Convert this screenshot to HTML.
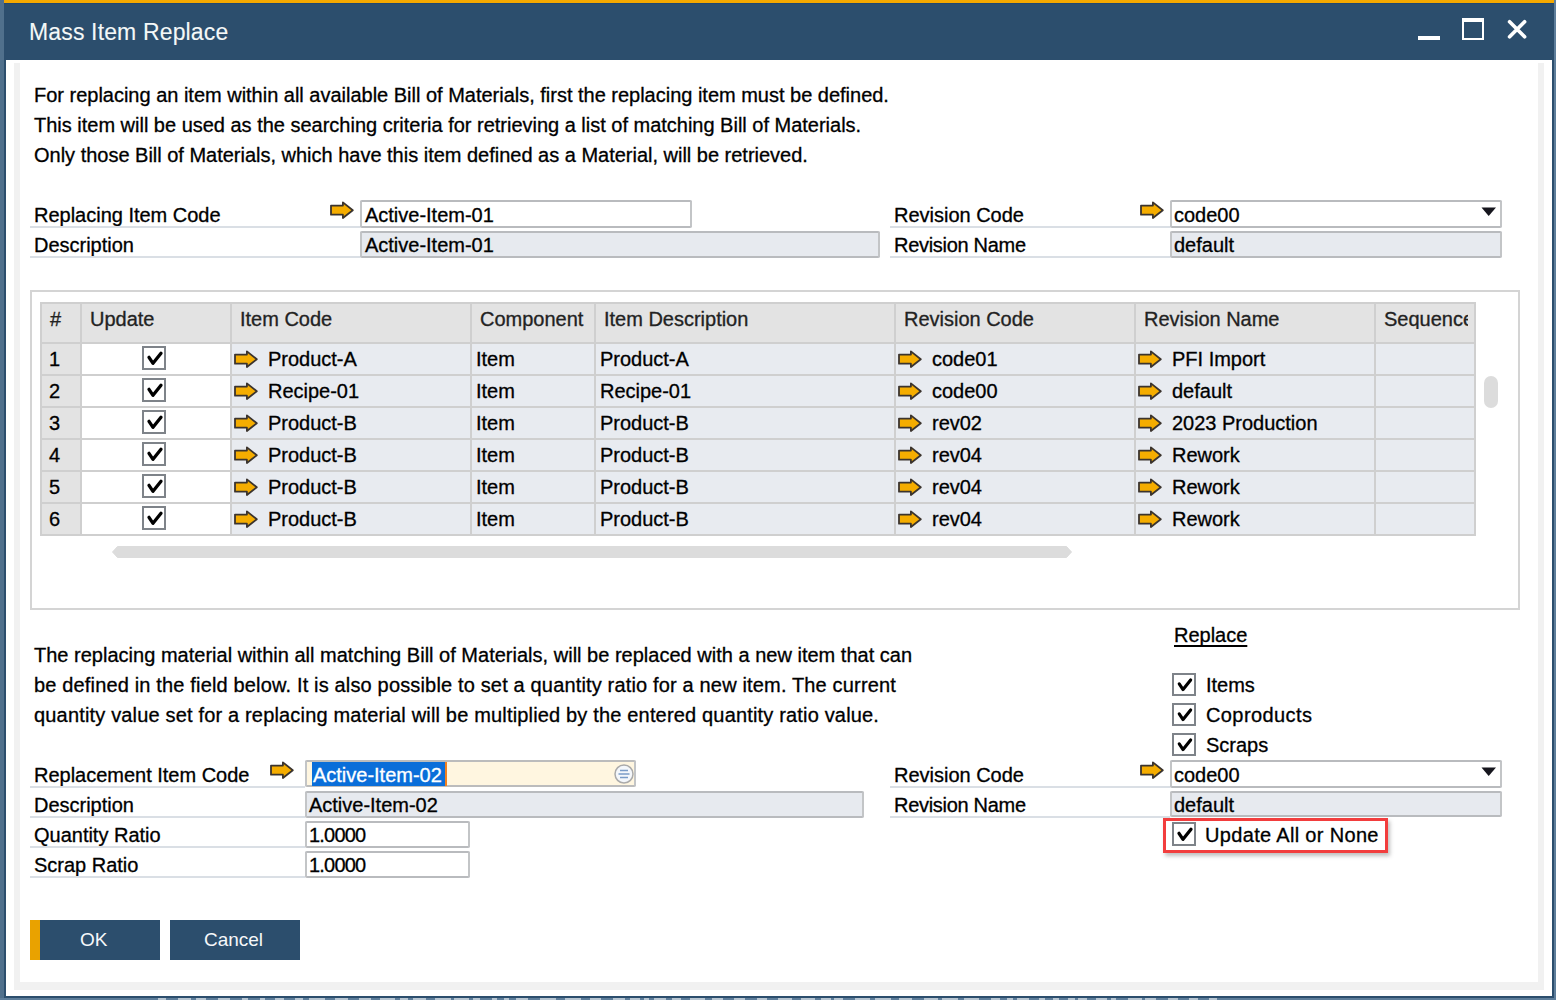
<!DOCTYPE html>
<html><head><meta charset="utf-8"><style>
html,body{margin:0;padding:0;width:1556px;height:1000px;overflow:hidden;background:#5e7e9b}
body{position:relative;font-family:"Liberation Sans", sans-serif}
.t{position:absolute;white-space:nowrap;font-family:"Liberation Sans", sans-serif;-webkit-text-stroke:0.3px currentColor;letter-spacing:-0.01px}
.r{position:absolute}
.fld{position:absolute;border:2px solid #b9bbbe;border-radius:2px}
.cb{position:absolute;border:2px solid #7e8389;background:#fff}
</style></head><body>
<div class="r" style="left:0px;top:0px;width:1556px;height:1000px;background:#5e7e9b;"></div>
<div class="r" style="left:0px;top:0px;width:4px;height:998px;background:#50708c;"></div>
<div class="r" style="left:4px;top:0px;width:1550px;height:998px;background:#2c4e6d;"></div>
<div class="r" style="left:4px;top:0px;width:1550px;height:3px;background:#f5a900;"></div>
<div class="r" style="left:4px;top:3px;width:1550px;height:1px;background:#22476f;"></div>
<div class="r" style="left:6px;top:60px;width:1546px;height:936px;background:#ffffff;"></div>
<div class="r" style="left:14px;top:63px;width:6px;height:927px;background:#f1f1f1;"></div>
<div class="r" style="left:1538px;top:63px;width:6px;height:927px;background:#f1f1f1;"></div>
<div class="r" style="left:14px;top:982px;width:1530px;height:8px;background:#f1f1f1;"></div>
<div class="r" style="left:158px;top:998px;width:8px;height:2px;background:#b8c6d2;"></div>
<div class="r" style="left:178px;top:998px;width:13px;height:2px;background:#b8c6d2;"></div>
<div class="r" style="left:196px;top:998px;width:10px;height:2px;background:#b8c6d2;"></div>
<div class="r" style="left:218px;top:998px;width:12px;height:2px;background:#b8c6d2;"></div>
<div class="r" style="left:242px;top:998px;width:6px;height:2px;background:#b8c6d2;"></div>
<div class="r" style="left:260px;top:998px;width:5px;height:2px;background:#b8c6d2;"></div>
<div class="r" style="left:275px;top:998px;width:9px;height:2px;background:#b8c6d2;"></div>
<div class="r" style="left:295px;top:998px;width:8px;height:2px;background:#b8c6d2;"></div>
<div class="r" style="left:309px;top:998px;width:16px;height:2px;background:#b8c6d2;"></div>
<div class="r" style="left:335px;top:998px;width:13px;height:2px;background:#b8c6d2;"></div>
<div class="r" style="left:359px;top:998px;width:12px;height:2px;background:#b8c6d2;"></div>
<div class="r" style="left:380px;top:998px;width:15px;height:2px;background:#b8c6d2;"></div>
<div class="r" style="left:400px;top:998px;width:8px;height:2px;background:#b8c6d2;"></div>
<div class="r" style="left:413px;top:998px;width:13px;height:2px;background:#b8c6d2;"></div>
<div class="r" style="left:435px;top:998px;width:16px;height:2px;background:#b8c6d2;"></div>
<div class="r" style="left:454px;top:998px;width:15px;height:2px;background:#b8c6d2;"></div>
<div class="r" style="left:473px;top:998px;width:7px;height:2px;background:#b8c6d2;"></div>
<div class="r" style="left:492px;top:998px;width:5px;height:2px;background:#b8c6d2;"></div>
<div class="r" style="left:504px;top:998px;width:5px;height:2px;background:#b8c6d2;"></div>
<div class="r" style="left:516px;top:998px;width:12px;height:2px;background:#b8c6d2;"></div>
<div class="r" style="left:540px;top:998px;width:16px;height:2px;background:#b8c6d2;"></div>
<div class="r" style="left:565px;top:998px;width:16px;height:2px;background:#b8c6d2;"></div>
<div class="r" style="left:590px;top:998px;width:11px;height:2px;background:#b8c6d2;"></div>
<div class="r" style="left:613px;top:998px;width:12px;height:2px;background:#b8c6d2;"></div>
<div class="r" style="left:630px;top:998px;width:10px;height:2px;background:#b8c6d2;"></div>
<div class="r" style="left:644px;top:998px;width:5px;height:2px;background:#b8c6d2;"></div>
<div class="r" style="left:654px;top:998px;width:12px;height:2px;background:#b8c6d2;"></div>
<div class="r" style="left:672px;top:998px;width:9px;height:2px;background:#b8c6d2;"></div>
<div class="r" style="left:690px;top:998px;width:15px;height:2px;background:#b8c6d2;"></div>
<div class="r" style="left:712px;top:998px;width:11px;height:2px;background:#b8c6d2;"></div>
<div class="r" style="left:734px;top:998px;width:11px;height:2px;background:#b8c6d2;"></div>
<div class="r" style="left:757px;top:998px;width:10px;height:2px;background:#b8c6d2;"></div>
<div class="r" style="left:778px;top:998px;width:14px;height:2px;background:#b8c6d2;"></div>
<div class="r" style="left:801px;top:998px;width:14px;height:2px;background:#b8c6d2;"></div>
<div class="r" style="left:821px;top:998px;width:10px;height:2px;background:#b8c6d2;"></div>
<div class="r" style="left:834px;top:998px;width:9px;height:2px;background:#b8c6d2;"></div>
<div class="r" style="left:855px;top:998px;width:15px;height:2px;background:#b8c6d2;"></div>
<div class="r" style="left:875px;top:998px;width:16px;height:2px;background:#b8c6d2;"></div>
<div class="r" style="left:899px;top:998px;width:13px;height:2px;background:#b8c6d2;"></div>
<div class="r" style="left:924px;top:998px;width:14px;height:2px;background:#b8c6d2;"></div>
<div class="r" style="left:942px;top:998px;width:16px;height:2px;background:#b8c6d2;"></div>
<div class="r" style="left:964px;top:998px;width:15px;height:2px;background:#b8c6d2;"></div>
<div class="r" style="left:991px;top:998px;width:9px;height:2px;background:#b8c6d2;"></div>
<div class="r" style="left:1007px;top:998px;width:6px;height:2px;background:#b8c6d2;"></div>
<div class="r" style="left:1017px;top:998px;width:12px;height:2px;background:#b8c6d2;"></div>
<div class="r" style="left:1039px;top:998px;width:6px;height:2px;background:#b8c6d2;"></div>
<div class="r" style="left:1053px;top:998px;width:6px;height:2px;background:#b8c6d2;"></div>
<div class="r" style="left:1068px;top:998px;width:7px;height:2px;background:#b8c6d2;"></div>
<div class="r" style="left:1078px;top:998px;width:9px;height:2px;background:#b8c6d2;"></div>
<div class="r" style="left:1096px;top:998px;width:11px;height:2px;background:#b8c6d2;"></div>
<div class="r" style="left:1111px;top:998px;width:5px;height:2px;background:#b8c6d2;"></div>
<div class="r" style="left:1128px;top:998px;width:14px;height:2px;background:#b8c6d2;"></div>
<div class="r" style="left:1145px;top:998px;width:11px;height:2px;background:#b8c6d2;"></div>
<div class="r" style="left:1168px;top:998px;width:10px;height:2px;background:#b8c6d2;"></div>
<div class="r" style="left:1189px;top:998px;width:9px;height:2px;background:#b8c6d2;"></div>
<div class="r" style="left:1209px;top:998px;width:8px;height:2px;background:#b8c6d2;"></div>
<div class="t" style="left:29px;top:21px;font-size:23px;line-height:23px;color:#f4f8f8;-webkit-text-stroke:0.1px #f4f8f8;letter-spacing:0.15px">Mass Item Replace</div>
<div class="r" style="left:1418px;top:36px;width:22px;height:4px;background:#ffffff;"></div>
<div class="r" style="left:1462px;top:18px;width:18px;height:16px;border:2px solid #fff;border-top-width:4px;border-bottom-width:2.5px;background:transparent"></div>
<svg width="22" height="22" viewBox="0 0 22 22" style="position:absolute;left:1506px;top:19px"><path d="M3.6,2.8 L18.6,17.8 M18.6,2.8 L3.6,17.8" stroke="#fff" stroke-width="3.7" stroke-linecap="round"/></svg>
<div class="t" style="left:34px;top:85px;font-size:20px;line-height:20px;color:#000;">For replacing an item within all available Bill of Materials, first the replacing item must be defined.</div>
<div class="t" style="left:34px;top:115px;font-size:20px;line-height:20px;color:#000;">This item will be used as the searching criteria for retrieving a list of matching Bill of Materials.</div>
<div class="t" style="left:34px;top:145px;font-size:20px;line-height:20px;color:#000;">Only those Bill of Materials, which have this item defined as a Material, will be retrieved.</div>
<div class="t" style="left:34px;top:205px;font-size:20px;line-height:20px;color:#000;">Replacing Item Code</div>
<div class="r" style="left:30px;top:226px;width:330px;height:2px;background:#dadfe5;"></div>
<div class="t" style="left:34px;top:235px;font-size:20px;line-height:20px;color:#000;">Description</div>
<div class="r" style="left:30px;top:256px;width:330px;height:2px;background:#dadfe5;"></div>
<svg width="24" height="19" viewBox="0 0 24 19" style="position:absolute;left:330px;top:201px"><path d="M1,4.6 H12.9 V1.4 L22.8,9.2 L12.9,17 V13.7 H1 Z" fill="#f5ad00" stroke="#3b342e" stroke-width="1.8" stroke-linejoin="round"/></svg>
<div class="fld" style="left:360px;top:200px;width:328px;height:24px;background:#fff;border-color:#b9bbbe;border-left-color:#c3c5c7;border-right-color:#c3c5c7"></div>
<div class="t" style="left:365px;top:205px;font-size:20px;line-height:20px;color:#000;">Active-Item-01</div>
<div class="fld" style="left:360px;top:231px;width:516px;height:23px;background:#e7eaef;border-color:#b9bbbe;border-left-color:#c3c5c7;border-right-color:#c3c5c7"></div>
<div class="t" style="left:365px;top:235px;font-size:20px;line-height:20px;color:#000;">Active-Item-01</div>
<div class="t" style="left:894px;top:205px;font-size:20px;line-height:20px;color:#000;">Revision Code</div>
<div class="r" style="left:890px;top:226px;width:280px;height:2px;background:#dadfe5;"></div>
<div class="t" style="left:894px;top:235px;font-size:20px;line-height:20px;color:#000;letter-spacing:-0.3px">Revision Name</div>
<div class="r" style="left:890px;top:256px;width:280px;height:2px;background:#dadfe5;"></div>
<svg width="24" height="19" viewBox="0 0 24 19" style="position:absolute;left:1140px;top:201px"><path d="M1,4.6 H12.9 V1.4 L22.8,9.2 L12.9,17 V13.7 H1 Z" fill="#f5ad00" stroke="#3b342e" stroke-width="1.8" stroke-linejoin="round"/></svg>
<div class="fld" style="left:1170px;top:200px;width:328px;height:24px;background:#fff;border-color:#b9bbbe;border-left-color:#c3c5c7;border-right-color:#c3c5c7"></div>
<div class="t" style="left:1174px;top:205px;font-size:20px;line-height:20px;color:#000;">code00</div>
<svg width="16" height="10" viewBox="0 0 16 10" style="position:absolute;left:1481px;top:207px"><path d="M0.5,0.5 H15 L7.7,9 Z" fill="#16161e"/></svg>
<div class="fld" style="left:1170px;top:231px;width:328px;height:23px;background:#e7eaef;border-color:#b9bbbe;border-left-color:#c3c5c7;border-right-color:#c3c5c7"></div>
<div class="t" style="left:1174px;top:235px;font-size:20px;line-height:20px;color:#000;">default</div>
<div class="r" style="left:30px;top:290px;width:1486px;height:316px;border:2px solid #d4d4d4;background:#fff"></div>
<div class="r" style="left:40px;top:302px;width:1436px;height:40px;background:#e3e3e3;"></div>
<div class="r" style="left:40px;top:342px;width:40px;height:32px;background:#e3e3e3;"></div>
<div class="r" style="left:80px;top:342px;width:150px;height:32px;background:#ffffff;"></div>
<div class="r" style="left:230px;top:342px;width:1246px;height:32px;background:#e8ebf0;"></div>
<div class="r" style="left:40px;top:374px;width:40px;height:32px;background:#e3e3e3;"></div>
<div class="r" style="left:80px;top:374px;width:150px;height:32px;background:#ffffff;"></div>
<div class="r" style="left:230px;top:374px;width:1246px;height:32px;background:#e8ebf0;"></div>
<div class="r" style="left:40px;top:406px;width:40px;height:32px;background:#e3e3e3;"></div>
<div class="r" style="left:80px;top:406px;width:150px;height:32px;background:#ffffff;"></div>
<div class="r" style="left:230px;top:406px;width:1246px;height:32px;background:#e8ebf0;"></div>
<div class="r" style="left:40px;top:438px;width:40px;height:32px;background:#e3e3e3;"></div>
<div class="r" style="left:80px;top:438px;width:150px;height:32px;background:#ffffff;"></div>
<div class="r" style="left:230px;top:438px;width:1246px;height:32px;background:#e8ebf0;"></div>
<div class="r" style="left:40px;top:470px;width:40px;height:32px;background:#e3e3e3;"></div>
<div class="r" style="left:80px;top:470px;width:150px;height:32px;background:#ffffff;"></div>
<div class="r" style="left:230px;top:470px;width:1246px;height:32px;background:#e8ebf0;"></div>
<div class="r" style="left:40px;top:502px;width:40px;height:32px;background:#e3e3e3;"></div>
<div class="r" style="left:80px;top:502px;width:150px;height:32px;background:#ffffff;"></div>
<div class="r" style="left:230px;top:502px;width:1246px;height:32px;background:#e8ebf0;"></div>
<div class="r" style="left:40px;top:302px;width:1436px;height:2px;background:#cfcfcf;"></div>
<div class="r" style="left:40px;top:342px;width:1436px;height:2px;background:#cfcfcf;"></div>
<div class="r" style="left:40px;top:374px;width:1436px;height:2px;background:#cfcfcf;"></div>
<div class="r" style="left:40px;top:406px;width:1436px;height:2px;background:#cfcfcf;"></div>
<div class="r" style="left:40px;top:438px;width:1436px;height:2px;background:#cfcfcf;"></div>
<div class="r" style="left:40px;top:470px;width:1436px;height:2px;background:#cfcfcf;"></div>
<div class="r" style="left:40px;top:502px;width:1436px;height:2px;background:#cfcfcf;"></div>
<div class="r" style="left:40px;top:534px;width:1436px;height:2px;background:#cfcfcf;"></div>
<div class="r" style="left:40px;top:302px;width:2px;height:234px;background:#cfcfcf;"></div>
<div class="r" style="left:80px;top:302px;width:2px;height:234px;background:#cfcfcf;"></div>
<div class="r" style="left:230px;top:302px;width:2px;height:234px;background:#cfcfcf;"></div>
<div class="r" style="left:470px;top:302px;width:2px;height:234px;background:#cfcfcf;"></div>
<div class="r" style="left:594px;top:302px;width:2px;height:234px;background:#cfcfcf;"></div>
<div class="r" style="left:894px;top:302px;width:2px;height:234px;background:#cfcfcf;"></div>
<div class="r" style="left:1134px;top:302px;width:2px;height:234px;background:#cfcfcf;"></div>
<div class="r" style="left:1374px;top:302px;width:2px;height:234px;background:#cfcfcf;"></div>
<div class="r" style="left:1474px;top:302px;width:2px;height:234px;background:#cfcfcf;"></div>
<div style="position:absolute;left:1376px;top:302px;width:96px;height:40px;overflow:hidden">
</div>
<div class="t" style="left:50px;top:309px;font-size:20px;line-height:20px;color:#222;">#</div>
<div class="t" style="left:90px;top:309px;font-size:20px;line-height:20px;color:#222;">Update</div>
<div class="t" style="left:240px;top:309px;font-size:20px;line-height:20px;color:#222;">Item Code</div>
<div class="t" style="left:480px;top:309px;font-size:20px;line-height:20px;color:#222;">Component</div>
<div class="t" style="left:604px;top:309px;font-size:20px;line-height:20px;color:#222;">Item Description</div>
<div class="t" style="left:904px;top:309px;font-size:20px;line-height:20px;color:#222;">Revision Code</div>
<div class="t" style="left:1144px;top:309px;font-size:20px;line-height:20px;color:#222;">Revision Name</div>
<div class="t" style="left:1384px;top:309px;width:84px;overflow:hidden;font-size:20px;line-height:20px;color:#222">Sequence</div>
<div class="t" style="left:49px;top:349px;font-size:20px;line-height:20px;color:#000;">1</div>
<div class="cb" style="left:142px;top:346px;width:20px;height:20px"><svg width="20" height="20" viewBox="0 0 20 20" style="position:absolute;left:0;top:0"><path d="M5,9.3 L9,15.3 L17,5.2" fill="none" stroke="#000" stroke-width="3.3" stroke-linejoin="round" stroke-linecap="round"/></svg></div>
<svg width="24" height="19" viewBox="0 0 24 19" style="position:absolute;left:234px;top:350px"><path d="M1,4.6 H12.9 V1.4 L22.8,9.2 L12.9,17 V13.7 H1 Z" fill="#f5ad00" stroke="#3b342e" stroke-width="1.8" stroke-linejoin="round"/></svg>
<div class="t" style="left:268px;top:349px;font-size:20px;line-height:20px;color:#000;">Product-A</div>
<div class="t" style="left:476px;top:349px;font-size:20px;line-height:20px;color:#000;">Item</div>
<div class="t" style="left:600px;top:349px;font-size:20px;line-height:20px;color:#000;">Product-A</div>
<svg width="24" height="19" viewBox="0 0 24 19" style="position:absolute;left:898px;top:350px"><path d="M1,4.6 H12.9 V1.4 L22.8,9.2 L12.9,17 V13.7 H1 Z" fill="#f5ad00" stroke="#3b342e" stroke-width="1.8" stroke-linejoin="round"/></svg>
<div class="t" style="left:932px;top:349px;font-size:20px;line-height:20px;color:#000;">code01</div>
<svg width="24" height="19" viewBox="0 0 24 19" style="position:absolute;left:1138px;top:350px"><path d="M1,4.6 H12.9 V1.4 L22.8,9.2 L12.9,17 V13.7 H1 Z" fill="#f5ad00" stroke="#3b342e" stroke-width="1.8" stroke-linejoin="round"/></svg>
<div class="t" style="left:1172px;top:349px;font-size:20px;line-height:20px;color:#000;">PFI Import</div>
<div class="t" style="left:49px;top:381px;font-size:20px;line-height:20px;color:#000;">2</div>
<div class="cb" style="left:142px;top:378px;width:20px;height:20px"><svg width="20" height="20" viewBox="0 0 20 20" style="position:absolute;left:0;top:0"><path d="M5,9.3 L9,15.3 L17,5.2" fill="none" stroke="#000" stroke-width="3.3" stroke-linejoin="round" stroke-linecap="round"/></svg></div>
<svg width="24" height="19" viewBox="0 0 24 19" style="position:absolute;left:234px;top:382px"><path d="M1,4.6 H12.9 V1.4 L22.8,9.2 L12.9,17 V13.7 H1 Z" fill="#f5ad00" stroke="#3b342e" stroke-width="1.8" stroke-linejoin="round"/></svg>
<div class="t" style="left:268px;top:381px;font-size:20px;line-height:20px;color:#000;">Recipe-01</div>
<div class="t" style="left:476px;top:381px;font-size:20px;line-height:20px;color:#000;">Item</div>
<div class="t" style="left:600px;top:381px;font-size:20px;line-height:20px;color:#000;">Recipe-01</div>
<svg width="24" height="19" viewBox="0 0 24 19" style="position:absolute;left:898px;top:382px"><path d="M1,4.6 H12.9 V1.4 L22.8,9.2 L12.9,17 V13.7 H1 Z" fill="#f5ad00" stroke="#3b342e" stroke-width="1.8" stroke-linejoin="round"/></svg>
<div class="t" style="left:932px;top:381px;font-size:20px;line-height:20px;color:#000;">code00</div>
<svg width="24" height="19" viewBox="0 0 24 19" style="position:absolute;left:1138px;top:382px"><path d="M1,4.6 H12.9 V1.4 L22.8,9.2 L12.9,17 V13.7 H1 Z" fill="#f5ad00" stroke="#3b342e" stroke-width="1.8" stroke-linejoin="round"/></svg>
<div class="t" style="left:1172px;top:381px;font-size:20px;line-height:20px;color:#000;">default</div>
<div class="t" style="left:49px;top:413px;font-size:20px;line-height:20px;color:#000;">3</div>
<div class="cb" style="left:142px;top:410px;width:20px;height:20px"><svg width="20" height="20" viewBox="0 0 20 20" style="position:absolute;left:0;top:0"><path d="M5,9.3 L9,15.3 L17,5.2" fill="none" stroke="#000" stroke-width="3.3" stroke-linejoin="round" stroke-linecap="round"/></svg></div>
<svg width="24" height="19" viewBox="0 0 24 19" style="position:absolute;left:234px;top:414px"><path d="M1,4.6 H12.9 V1.4 L22.8,9.2 L12.9,17 V13.7 H1 Z" fill="#f5ad00" stroke="#3b342e" stroke-width="1.8" stroke-linejoin="round"/></svg>
<div class="t" style="left:268px;top:413px;font-size:20px;line-height:20px;color:#000;">Product-B</div>
<div class="t" style="left:476px;top:413px;font-size:20px;line-height:20px;color:#000;">Item</div>
<div class="t" style="left:600px;top:413px;font-size:20px;line-height:20px;color:#000;">Product-B</div>
<svg width="24" height="19" viewBox="0 0 24 19" style="position:absolute;left:898px;top:414px"><path d="M1,4.6 H12.9 V1.4 L22.8,9.2 L12.9,17 V13.7 H1 Z" fill="#f5ad00" stroke="#3b342e" stroke-width="1.8" stroke-linejoin="round"/></svg>
<div class="t" style="left:932px;top:413px;font-size:20px;line-height:20px;color:#000;">rev02</div>
<svg width="24" height="19" viewBox="0 0 24 19" style="position:absolute;left:1138px;top:414px"><path d="M1,4.6 H12.9 V1.4 L22.8,9.2 L12.9,17 V13.7 H1 Z" fill="#f5ad00" stroke="#3b342e" stroke-width="1.8" stroke-linejoin="round"/></svg>
<div class="t" style="left:1172px;top:413px;font-size:20px;line-height:20px;color:#000;">2023 Production</div>
<div class="t" style="left:49px;top:445px;font-size:20px;line-height:20px;color:#000;">4</div>
<div class="cb" style="left:142px;top:442px;width:20px;height:20px"><svg width="20" height="20" viewBox="0 0 20 20" style="position:absolute;left:0;top:0"><path d="M5,9.3 L9,15.3 L17,5.2" fill="none" stroke="#000" stroke-width="3.3" stroke-linejoin="round" stroke-linecap="round"/></svg></div>
<svg width="24" height="19" viewBox="0 0 24 19" style="position:absolute;left:234px;top:446px"><path d="M1,4.6 H12.9 V1.4 L22.8,9.2 L12.9,17 V13.7 H1 Z" fill="#f5ad00" stroke="#3b342e" stroke-width="1.8" stroke-linejoin="round"/></svg>
<div class="t" style="left:268px;top:445px;font-size:20px;line-height:20px;color:#000;">Product-B</div>
<div class="t" style="left:476px;top:445px;font-size:20px;line-height:20px;color:#000;">Item</div>
<div class="t" style="left:600px;top:445px;font-size:20px;line-height:20px;color:#000;">Product-B</div>
<svg width="24" height="19" viewBox="0 0 24 19" style="position:absolute;left:898px;top:446px"><path d="M1,4.6 H12.9 V1.4 L22.8,9.2 L12.9,17 V13.7 H1 Z" fill="#f5ad00" stroke="#3b342e" stroke-width="1.8" stroke-linejoin="round"/></svg>
<div class="t" style="left:932px;top:445px;font-size:20px;line-height:20px;color:#000;">rev04</div>
<svg width="24" height="19" viewBox="0 0 24 19" style="position:absolute;left:1138px;top:446px"><path d="M1,4.6 H12.9 V1.4 L22.8,9.2 L12.9,17 V13.7 H1 Z" fill="#f5ad00" stroke="#3b342e" stroke-width="1.8" stroke-linejoin="round"/></svg>
<div class="t" style="left:1172px;top:445px;font-size:20px;line-height:20px;color:#000;">Rework</div>
<div class="t" style="left:49px;top:477px;font-size:20px;line-height:20px;color:#000;">5</div>
<div class="cb" style="left:142px;top:474px;width:20px;height:20px"><svg width="20" height="20" viewBox="0 0 20 20" style="position:absolute;left:0;top:0"><path d="M5,9.3 L9,15.3 L17,5.2" fill="none" stroke="#000" stroke-width="3.3" stroke-linejoin="round" stroke-linecap="round"/></svg></div>
<svg width="24" height="19" viewBox="0 0 24 19" style="position:absolute;left:234px;top:478px"><path d="M1,4.6 H12.9 V1.4 L22.8,9.2 L12.9,17 V13.7 H1 Z" fill="#f5ad00" stroke="#3b342e" stroke-width="1.8" stroke-linejoin="round"/></svg>
<div class="t" style="left:268px;top:477px;font-size:20px;line-height:20px;color:#000;">Product-B</div>
<div class="t" style="left:476px;top:477px;font-size:20px;line-height:20px;color:#000;">Item</div>
<div class="t" style="left:600px;top:477px;font-size:20px;line-height:20px;color:#000;">Product-B</div>
<svg width="24" height="19" viewBox="0 0 24 19" style="position:absolute;left:898px;top:478px"><path d="M1,4.6 H12.9 V1.4 L22.8,9.2 L12.9,17 V13.7 H1 Z" fill="#f5ad00" stroke="#3b342e" stroke-width="1.8" stroke-linejoin="round"/></svg>
<div class="t" style="left:932px;top:477px;font-size:20px;line-height:20px;color:#000;">rev04</div>
<svg width="24" height="19" viewBox="0 0 24 19" style="position:absolute;left:1138px;top:478px"><path d="M1,4.6 H12.9 V1.4 L22.8,9.2 L12.9,17 V13.7 H1 Z" fill="#f5ad00" stroke="#3b342e" stroke-width="1.8" stroke-linejoin="round"/></svg>
<div class="t" style="left:1172px;top:477px;font-size:20px;line-height:20px;color:#000;">Rework</div>
<div class="t" style="left:49px;top:509px;font-size:20px;line-height:20px;color:#000;">6</div>
<div class="cb" style="left:142px;top:506px;width:20px;height:20px"><svg width="20" height="20" viewBox="0 0 20 20" style="position:absolute;left:0;top:0"><path d="M5,9.3 L9,15.3 L17,5.2" fill="none" stroke="#000" stroke-width="3.3" stroke-linejoin="round" stroke-linecap="round"/></svg></div>
<svg width="24" height="19" viewBox="0 0 24 19" style="position:absolute;left:234px;top:510px"><path d="M1,4.6 H12.9 V1.4 L22.8,9.2 L12.9,17 V13.7 H1 Z" fill="#f5ad00" stroke="#3b342e" stroke-width="1.8" stroke-linejoin="round"/></svg>
<div class="t" style="left:268px;top:509px;font-size:20px;line-height:20px;color:#000;">Product-B</div>
<div class="t" style="left:476px;top:509px;font-size:20px;line-height:20px;color:#000;">Item</div>
<div class="t" style="left:600px;top:509px;font-size:20px;line-height:20px;color:#000;">Product-B</div>
<svg width="24" height="19" viewBox="0 0 24 19" style="position:absolute;left:898px;top:510px"><path d="M1,4.6 H12.9 V1.4 L22.8,9.2 L12.9,17 V13.7 H1 Z" fill="#f5ad00" stroke="#3b342e" stroke-width="1.8" stroke-linejoin="round"/></svg>
<div class="t" style="left:932px;top:509px;font-size:20px;line-height:20px;color:#000;">rev04</div>
<svg width="24" height="19" viewBox="0 0 24 19" style="position:absolute;left:1138px;top:510px"><path d="M1,4.6 H12.9 V1.4 L22.8,9.2 L12.9,17 V13.7 H1 Z" fill="#f5ad00" stroke="#3b342e" stroke-width="1.8" stroke-linejoin="round"/></svg>
<div class="t" style="left:1172px;top:509px;font-size:20px;line-height:20px;color:#000;">Rework</div>
<svg width="962" height="14" viewBox="0 0 962 14" style="position:absolute;left:111px;top:545px"><path d="M1.5,7 L6.5,1.5 H955.5 L960.5,7 L955.5,12.5 H6.5 Z" fill="#dcdcdc" stroke="#dcdcdc" stroke-width="1" stroke-linejoin="round"/></svg>
<div class="r" style="left:1484px;top:376px;width:14px;height:32px;background:#dcdcdc;border-radius:7px"></div>
<div class="t" style="left:34px;top:645px;font-size:20px;line-height:20px;color:#000;letter-spacing:0.01px">The replacing material within all matching Bill of Materials, will be replaced with a new item that can</div>
<div class="t" style="left:34px;top:675px;font-size:20px;line-height:20px;color:#000;letter-spacing:0.16px">be defined in the field below. It is also possible to set a quantity ratio for a new item. The current</div>
<div class="t" style="left:34px;top:705px;font-size:20px;line-height:20px;color:#000;letter-spacing:0.17px">quantity value set for a replacing material will be multiplied by the entered quantity ratio value.</div>
<div class="t" style="left:1174px;top:625px;font-size:20px;line-height:20px;color:#000;text-decoration:underline;text-underline-offset:3px;text-decoration-thickness:2px;text-decoration-skip-ink:none">Replace</div>
<div class="cb" style="left:1172px;top:673px;width:20px;height:19px"><svg width="20" height="19" viewBox="0 0 20 20" style="position:absolute;left:0;top:0"><path d="M5,9.3 L9,15.3 L17,5.2" fill="none" stroke="#000" stroke-width="3.3" stroke-linejoin="round" stroke-linecap="round"/></svg></div>
<div class="t" style="left:1206px;top:675px;font-size:20px;line-height:20px;color:#000;">Items</div>
<div class="cb" style="left:1172px;top:703px;width:20px;height:19px"><svg width="20" height="19" viewBox="0 0 20 20" style="position:absolute;left:0;top:0"><path d="M5,9.3 L9,15.3 L17,5.2" fill="none" stroke="#000" stroke-width="3.3" stroke-linejoin="round" stroke-linecap="round"/></svg></div>
<div class="t" style="left:1206px;top:705px;font-size:20px;line-height:20px;color:#000;letter-spacing:0.4px">Coproducts</div>
<div class="cb" style="left:1172px;top:733px;width:20px;height:19px"><svg width="20" height="19" viewBox="0 0 20 20" style="position:absolute;left:0;top:0"><path d="M5,9.3 L9,15.3 L17,5.2" fill="none" stroke="#000" stroke-width="3.3" stroke-linejoin="round" stroke-linecap="round"/></svg></div>
<div class="t" style="left:1206px;top:735px;font-size:20px;line-height:20px;color:#000;">Scraps</div>
<div class="t" style="left:34px;top:765px;font-size:20px;line-height:20px;color:#000;">Replacement Item Code</div>
<div class="r" style="left:30px;top:786px;width:275px;height:2px;background:#dadfe5;"></div>
<div class="t" style="left:34px;top:795px;font-size:20px;line-height:20px;color:#000;">Description</div>
<div class="r" style="left:30px;top:816px;width:275px;height:2px;background:#dadfe5;"></div>
<div class="t" style="left:34px;top:825px;font-size:20px;line-height:20px;color:#000;">Quantity Ratio</div>
<div class="r" style="left:30px;top:846px;width:275px;height:2px;background:#dadfe5;"></div>
<div class="t" style="left:34px;top:855px;font-size:20px;line-height:20px;color:#000;">Scrap Ratio</div>
<div class="r" style="left:30px;top:876px;width:275px;height:2px;background:#dadfe5;"></div>
<svg width="24" height="19" viewBox="0 0 24 19" style="position:absolute;left:270px;top:761px"><path d="M1,4.6 H12.9 V1.4 L22.8,9.2 L12.9,17 V13.7 H1 Z" fill="#f5ad00" stroke="#3b342e" stroke-width="1.8" stroke-linejoin="round"/></svg>
<div class="fld" style="left:305px;top:760px;width:327px;height:23px;background:#fff6e0;border-color:#bcbcbc;border-left-color:#c3c5c7;border-right-color:#c3c5c7"></div>
<div class="r" style="left:312px;top:762px;width:133px;height:24px;background:#0a6ed9;"></div>
<div class="r" style="left:445px;top:762px;width:2px;height:24px;background:#f08020;"></div>
<div class="t" style="left:313px;top:765px;font-size:20px;line-height:20px;color:#fff;">Active-Item-02</div>
<svg width="22" height="22" viewBox="0 0 22 22" style="position:absolute;left:613px;top:763px"><circle cx="11" cy="11" r="9" fill="#f4f7fb" stroke="#aaa" stroke-width="1.5"/><path d="M7,7.5 H15 M5.5,11 H16.5 M7,14.5 H15" stroke="#7a9cc8" stroke-width="1.6"/></svg>
<div class="fld" style="left:305px;top:791px;width:555px;height:23px;background:#e7eaef;border-color:#b9bbbe;border-left-color:#c3c5c7;border-right-color:#c3c5c7"></div>
<div class="t" style="left:309px;top:795px;font-size:20px;line-height:20px;color:#000;">Active-Item-02</div>
<div class="fld" style="left:305px;top:821px;width:161px;height:23px;background:#fff;border-color:#b9bbbe;border-left-color:#c3c5c7;border-right-color:#c3c5c7"></div>
<div class="t" style="left:309px;top:825px;font-size:20px;line-height:20px;color:#000;letter-spacing:-0.8px">1.0000</div>
<div class="fld" style="left:305px;top:851px;width:161px;height:23px;background:#fff;border-color:#b9bbbe;border-left-color:#c3c5c7;border-right-color:#c3c5c7"></div>
<div class="t" style="left:309px;top:855px;font-size:20px;line-height:20px;color:#000;letter-spacing:-0.8px">1.0000</div>
<div class="t" style="left:894px;top:765px;font-size:20px;line-height:20px;color:#000;">Revision Code</div>
<div class="r" style="left:890px;top:786px;width:280px;height:2px;background:#dadfe5;"></div>
<div class="t" style="left:894px;top:795px;font-size:20px;line-height:20px;color:#000;letter-spacing:-0.3px">Revision Name</div>
<div class="r" style="left:890px;top:816px;width:280px;height:2px;background:#dadfe5;"></div>
<svg width="24" height="19" viewBox="0 0 24 19" style="position:absolute;left:1140px;top:761px"><path d="M1,4.6 H12.9 V1.4 L22.8,9.2 L12.9,17 V13.7 H1 Z" fill="#f5ad00" stroke="#3b342e" stroke-width="1.8" stroke-linejoin="round"/></svg>
<div class="fld" style="left:1170px;top:760px;width:328px;height:24px;background:#fff;border-color:#b9bbbe;border-left-color:#c3c5c7;border-right-color:#c3c5c7"></div>
<div class="t" style="left:1174px;top:765px;font-size:20px;line-height:20px;color:#000;">code00</div>
<svg width="16" height="10" viewBox="0 0 16 10" style="position:absolute;left:1481px;top:767px"><path d="M0.5,0.5 H15 L7.7,9 Z" fill="#16161e"/></svg>
<div class="fld" style="left:1170px;top:791px;width:328px;height:22px;background:#e7eaef;border-color:#b9bbbe;border-left-color:#c3c5c7;border-right-color:#c3c5c7"></div>
<div class="t" style="left:1174px;top:795px;font-size:20px;line-height:20px;color:#000;">default</div>
<div class="r" style="left:1163px;top:818px;width:219px;height:29px;border:3px solid #f23d3d;box-shadow:2px 3px 4px rgba(0,0,0,0.25)"></div>
<div class="cb" style="left:1172px;top:822px;width:20px;height:20px"><svg width="20" height="20" viewBox="0 0 20 20" style="position:absolute;left:0;top:0"><path d="M5,9.3 L9,15.3 L17,5.2" fill="none" stroke="#000" stroke-width="3.3" stroke-linejoin="round" stroke-linecap="round"/></svg></div>
<div class="t" style="left:1205px;top:825px;font-size:20px;line-height:20px;color:#000;letter-spacing:0.33px">Update All or None</div>
<div class="r" style="left:30px;top:920px;width:130px;height:40px;background:#2c4e6d;"></div>
<div class="r" style="left:30px;top:920px;width:10px;height:40px;background:#e9a200;"></div>
<div class="r" style="left:170px;top:920px;width:130px;height:40px;background:#2c4e6d;"></div>
<div class="t" style="left:80px;top:930px;font-size:19px;line-height:19px;color:#f6f8fa;-webkit-text-stroke:0">OK</div>
<div class="t" style="left:204px;top:930px;font-size:19px;line-height:19px;color:#f6f8fa;-webkit-text-stroke:0">Cancel</div>
</body></html>
